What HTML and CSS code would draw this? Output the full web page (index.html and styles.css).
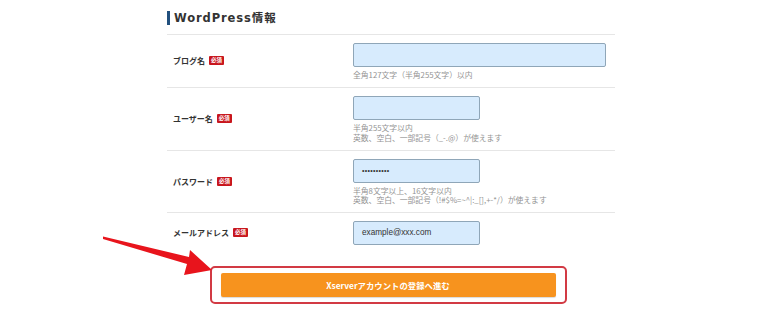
FILE: index.html
```html
<!DOCTYPE html>
<html lang="ja">
<head>
    <meta charset="UTF-8">
    <title>WordPress情報</title>
    <link rel="stylesheet" href="styles.css">
</head>
<body>
    <div class="form-box">
        <h2 class="section-title">WordPress情報</h2>

        <div class="row">
            <div class="label">ブログ名<span class="req">必須</span></div>
            <div class="field">
                <div class="input wide"></div>
                <p class="hint">全角127文字（半角255文字）以内</p>
            </div>
        </div>

        <div class="row">
            <div class="label">ユーザー名<span class="req">必須</span></div>
            <div class="field">
                <div class="input"></div>
                <p class="hint">半角255文字以内<br>英数、空白、一部記号（_-.@）が使えます</p>
            </div>
        </div>

        <div class="row">
            <div class="label">パスワード<span class="req">必須</span></div>
            <div class="field">
                <div class="input dots">••••••••••</div>
                <p class="hint">半角8文字以上、16文字以内<br>英数、空白、一部記号（!#$%=~^|:_[],+-*/）が使えます</p>
            </div>
        </div>

        <div class="row">
            <div class="label">メールアドレス<span class="req">必須</span></div>
            <div class="field">
                <div class="input mail">example@xxx.com</div>
            </div>
        </div>

        <div class="submit-wrap">
            <div class="submit-frame">
                <button class="submit">Xserverアカウントの登録へ進む</button>
            </div>
        </div>
    </div>

    <svg class="arrow" width="130" height="60" viewBox="95 225 130 60">
        <polygon points="103,236.5 189,257 190,250 212,270 184,275 187,264 103,239" fill="#e8141c"/>
    </svg>
</body>
</html>
```

FILE: styles.css
```css
body {
    margin: 0;
    font-family: "Noto Sans CJK JP", sans-serif;
    color: #333;
    background: #fff;
}
.form-box {
    width: 448px;
    margin-left: 167px;
    padding-top: 11px;
}
.section-title {
    margin: 0 0 9px;
    height: 14px;
    padding-left: 4px;
    border-left: 3px solid #22507e;
    font-family: "DejaVu Sans", "Noto Sans CJK JP", sans-serif;
    font-size: 11.5px;
    font-weight: bold;
    line-height: 14px;
    letter-spacing: 0.9px;
    color: #333;
}
.row {
    display: flex;
    border-top: 1px solid #e6e6e6;
    padding: 7px 0 7.5px;
}
.row:last-of-type {
    border-bottom: 1px solid #e6e6e6;
    padding-bottom: 8px;
}
.label {
    width: 180px;
    padding-left: 6px;
    display: flex;
    align-items: center;
    font-size: 8px;
    font-weight: bold;
    color: #333;
}
.req {
    display: inline-block;
    background: #c8161d;
    color: #fff;
    font-size: 5.5px;
    line-height: 9px;
    padding: 0 2px;
    margin-left: 4px;
    border-radius: 1px;
}
.field {
    flex: 1;
    padding-top: 1px;
}
.input {
    width: 127px;
    height: 24px;
    box-sizing: border-box;
    background: #d7ebfd;
    border: 1px solid #8fa6b8;
    border-radius: 2px;
    font-size: 8.2px;
    line-height: 22px;
    padding-left: 8px;
    color: #333;
}
.input.wide {
    width: 253px;
}
.input.dots {
    font-family: "Liberation Sans", Arial, sans-serif;
    font-size: 7px;
    letter-spacing: 0.3px;
}
.input.mail {
    font-family: "Liberation Sans", Arial, sans-serif;
}
.hint {
    margin: 3px 0 0;
    font-size: 7.8px;
    line-height: 9.5px;
    color: #939393;
}
.submit-wrap {
    display: flex;
    justify-content: center;
    padding-top: 13px;
}
.submit-frame {
    border: 2px solid #d23a44;
    border-radius: 5px;
    padding: 5px 9px;
    margin-left: -6px;
}
.submit {
    display: block;
    width: 335px;
    height: 24px;
    border: none;
    border-radius: 2px;
    background: #f7931e;
    color: #fff;
    font-family: "Noto Sans CJK JP", sans-serif;
    font-size: 8.4px;
    font-weight: bold;
    box-shadow: 0 1px 1px rgba(0, 0, 0, 0.15);
}
.arrow {
    position: absolute;
    left: 95px;
    top: 225px;
}
```
